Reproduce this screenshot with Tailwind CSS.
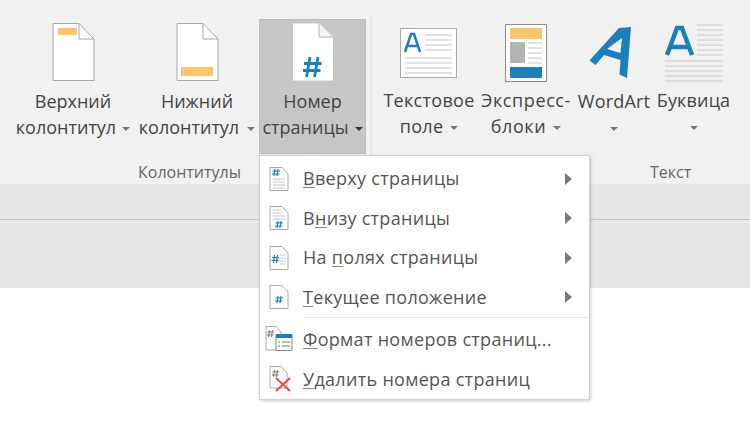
<!DOCTYPE html>
<html><head><meta charset="utf-8"><script src="https://cdn.jsdelivr.net/npm/@tailwindcss/browser@4"></script></head>
<body class="m-0">
<div class="relative w-[750px] h-[428px] overflow-hidden bg-white text-[#444444] font-['Open_Sans','Noto_Sans',sans-serif]">
  <div class="h-[184px] bg-[#f1f1f1] flex">
    <section class="w-[370px] h-full flex flex-col">
      <div class="flex h-[154px] pt-[19px]">
        <div class="w-[11px]"></div>
        <div class="w-[124px] flex flex-col items-center">
          <svg class="mt-[4px] mb-[5px]" width="44" height="60" viewBox="0 0 44 60"><path d="M2 .5H28L43 16V57.500H2Z" fill="#fff" stroke="#a8a8a8"/><path d="M28 .5V16H43" fill="none" stroke="#a8a8a8"/><rect x="7" y="5" width="19" height="7" fill="#fbc56b"/></svg>
          <div class="text-[18px] leading-[26px] text-center whitespace-nowrap">Верхний<br>колонтитул<span class="inline-block align-middle ml-[6px] w-0 h-0 border-x-[4px] border-x-transparent border-t-[4px] border-t-[#777]"></span></div>
        </div>
        <div class="w-[124px] flex flex-col items-center">
          <svg class="mt-[4px] mb-[5px]" width="44" height="60" viewBox="0 0 44 60"><path d="M2 .5H28L43 16V57.500H2Z" fill="#fff" stroke="#a8a8a8"/><path d="M28 .5V16H43" fill="none" stroke="#a8a8a8"/><rect x="6" y="44" width="32" height="9" fill="#fbc56b"/></svg>
          <div class="text-[18px] leading-[26px] text-center whitespace-nowrap">Нижний<br>колонтитул<span class="inline-block align-middle ml-[8px] w-0 h-0 border-x-[4px] border-x-transparent border-t-[4px] border-t-[#777]"></span></div>
        </div>
        <div class="w-[107px] h-[135px] bg-[#c6c6c6] border border-[#bdbdbd] flex flex-col items-center">
          <svg class="mt-[3px] mb-[5px]" width="42" height="60" viewBox="0 0 42 60"><path d="M1 .5H27L41 14V57.500H1Z" fill="#fff"/><path d="M27 .5V14H41" fill="#f1f1f1" stroke="#b0b0b0"/><path d="M18 34 14.500 54M26 34 22.500 54M12 40.500H29.500M11 47.500H28.500" stroke="#1c7fbd" stroke-width="2.800" fill="none"/></svg>
          <div class="text-[18px] leading-[26px] text-center whitespace-nowrap">Номер<br>страницы<span class="inline-block align-middle ml-[6px] w-0 h-0 border-x-[4px] border-x-transparent border-t-[4px] border-t-[#333]"></span></div>
        </div>
      </div>
      <div class="flex-1 pl-[138px] pt-[6px] text-[16px] leading-[24px] text-[#666]">Колонтитулы</div>
    </section>
    <div class="w-[2px] h-[140px] mt-[15px] bg-[#e6e6e6]"></div>
    <section class="flex-1 h-full flex flex-col">
      <div class="flex h-[154px] pt-[19px]">
        <div class="w-[7px]"></div>
        <div class="w-[100px] flex flex-col items-center">
          <svg class="mt-[9px] mb-[9px]" width="58" height="50" viewBox="0 0 58 50"><rect x=".5" y=".5" width="56" height="49" fill="#fff" stroke="#a8a8a8"/><path d="M5 24 11 6h3l6 18M7.500 18H17" fill="none" stroke="#1c7fbd" stroke-width="2.500"/><path d="M25 7H52M25 12H52M25 17H52M25 22H52M5 30H52M5 35H52M5 40H52M5 45H52" stroke="#c4c4c4"/></svg>
          <div class="text-[18px] leading-[26px] text-center whitespace-nowrap tracking-[0.3px]">Текстовое<br>поле<span class="inline-block align-middle ml-[7px] w-0 h-0 border-x-[4px] border-x-transparent border-t-[4px] border-t-[#777]"></span></div>
        </div>
        <div class="w-[94px] flex flex-col items-center">
          <svg class="mt-[5px] mb-[5px]" width="42" height="58" viewBox="0 0 42 58"><rect x=".5" y=".5" width="41" height="57" fill="#fff" stroke="#8c8c8c"/><rect x="5" y="4" width="32" height="11" fill="#fbc56b"/><rect x="5" y="18" width="15" height="21" fill="#b3b3b3"/><path d="M23 19H37M23 24H37M23 29H37M23 34H37M23 39H37" stroke="#c4c4c4"/><rect x="5" y="43" width="32" height="11" fill="#1c7fbd"/></svg>
          <div class="text-[18px] leading-[26px] text-center whitespace-nowrap tracking-[0.6px]">Экспресс-<br>блоки<span class="inline-block align-middle ml-[7px] w-0 h-0 border-x-[4px] border-x-transparent border-t-[4px] border-t-[#777]"></span></div>
        </div>
        <div class="w-[82px] flex flex-col items-center">
          <svg class="mt-[8px] mb-[6px]" width="50" height="55" viewBox="590 27 50 55"><path d="M590.500 60.500 620 28 632 27 628 78 620.500 74.500 621.500 60 605 55 596.500 65ZM608 49 623 38 621.500 53Z" fill="#1c7fbd" fill-rule="evenodd"/></svg>
          <div class="text-[18px] leading-[26px] text-center whitespace-nowrap tracking-[0.2px]">WordArt<br><span class="inline-block align-middle w-0 h-0 border-x-[4px] border-x-transparent border-t-[4px] border-t-[#777]"></span></div>
        </div>
        <div class="w-[77px] flex flex-col items-center">
          <svg class="mt-[5px] mb-[5px]" width="60" height="58" viewBox="0 0 60 58"><path d="M3 31 13 4h5l10 27M7 23H24" fill="none" stroke="#1c7fbd" stroke-width="4.500"/><path d="M33 1H59M33 6H59M33 11H59M33 16H59M33 21H59M33 26H59M33 31H59M1 37H59M1 42H59M1 47H59M1 52H59M1 57H59" stroke="#c8c8c8"/></svg>
          <div class="text-[18px] leading-[26px] text-center whitespace-nowrap tracking-[0.15px]">Буквица<br><span class="inline-block align-middle w-0 h-0 border-x-[4px] border-x-transparent border-t-[4px] border-t-[#777]"></span></div>
        </div>
      </div>
      <div class="flex-1 pl-[278px] pt-[6px] text-[16px] leading-[24px] text-[#666]">Текст</div>
    </section>
  </div>
  <div class="h-[36px] bg-[#e6e6e6] border-b border-[#c9c9c9]"></div>
  <div class="h-[68px] bg-[#e6e6e6]"></div>

  <div class="absolute left-[259px] top-[155px] w-[331px] h-[245px] bg-white border border-[#d0d0d0] shadow-[1px_1px_3px_rgba(0,0,0,0.2)] text-[18px] tracking-[0.3px] text-[#555]">
    <div class="flex flex-col pt-[3px]">
      <div class="h-[39.500px] flex items-center pl-[9px]">
        <svg width="20" height="24" viewBox="0 0 20 24"><path d="M1 .5H13L19 7V23.500H1Z" fill="#fff" stroke="#a8a8a8"/><path d="M4 12H16M4 15H16M4 18H16M4 21H16" stroke="#c4c4c4"/><path d="M6 2 5 9M9 2 8 9M3.500 4H11M3 7H10.500" stroke="#1c7fbd" stroke-width="1.200"/></svg>
        <span class="ml-[14px]"><u class="underline-offset-2 decoration-[#888]">В</u>верху страницы</span>
        <span class="ml-auto mr-[17px] w-0 h-0 border-y-[6px] border-y-transparent border-l-[7px] border-l-[#777]"></span>
      </div>
      <div class="h-[39.500px] flex items-center pl-[9px]">
        <svg width="20" height="24" viewBox="0 0 20 24"><path d="M1 .5H13L19 7V23.500H1Z" fill="#fff" stroke="#a8a8a8"/><path d="M4 4H12M4 7H12M4 10H16M4 13H16" stroke="#c4c4c4"/><path d="M9 15 8 22M12 15 11 22M6.500 17H14M6 20H13.500" stroke="#1c7fbd" stroke-width="1.200"/></svg>
        <span class="ml-[14px]">В<u class="underline-offset-2 decoration-[#888]">н</u>изу страницы</span>
        <span class="ml-auto mr-[17px] w-0 h-0 border-y-[6px] border-y-transparent border-l-[7px] border-l-[#777]"></span>
      </div>
      <div class="h-[39.500px] flex items-center pl-[9px]">
        <svg width="20" height="24" viewBox="0 0 20 24"><path d="M1 .5H13L19 7V23.500H1Z" fill="#fff" stroke="#a8a8a8"/><path d="M11 9H17M11 12H17M11 15H17M11 18H17" stroke="#c4c4c4"/><path d="M5.500 9 4.500 17M8.500 9 7.500 17M3 11.500H10M2.500 14.500H9.500" stroke="#1c7fbd" stroke-width="1.200"/></svg>
        <span class="ml-[14px]">На <u class="underline-offset-2 decoration-[#888]">п</u>олях страницы</span>
        <span class="ml-auto mr-[17px] w-0 h-0 border-y-[6px] border-y-transparent border-l-[7px] border-l-[#777]"></span>
      </div>
      <div class="h-[39.500px] flex items-center pl-[9px]">
        <svg width="20" height="24" viewBox="0 0 20 24"><path d="M1 .5H13L19 7V23.500H1Z" fill="#fff" stroke="#a8a8a8"/><path d="M9 11 8 18M12 11 11 18M6.500 13H14M6 16H13.500" stroke="#1c7fbd" stroke-width="1.200"/></svg>
        <span class="ml-[14px]"><u class="underline-offset-2 decoration-[#888]">Т</u>екущее положение</span>
        <span class="ml-auto mr-[17px] w-0 h-0 border-y-[6px] border-y-transparent border-l-[7px] border-l-[#777]"></span>
      </div>
      <div class="h-px ml-[44px] bg-[#e4e4e4]"></div>
      <div class="h-[40px] flex items-center pl-[5px] pt-[2px]">
        <svg width="28" height="26" viewBox="0 0 28 26"><path d="M1 .5H11L16 6V24H1Z" fill="#fff" stroke="#a8a8a8"/><path d="M4.500 4 3.500 11M7.500 4 6.500 11M2.500 6H9M2 9H8.500" stroke="#777" stroke-width="1"/><rect x="11" y="8.500" width="16" height="16" fill="#fff" stroke="#888"/><rect x="11" y="8" width="16" height="4" fill="#1c7fbd"/><path d="M13 16H15M17 16H25M13 20H15M17 20H25" stroke="#777"/></svg>
        <span class="ml-[10px]"><u class="underline-offset-2 decoration-[#888]">Ф</u>ормат номеров страниц...</span>
      </div>
      <div class="h-[40px] flex items-center pl-[8px] pt-[2px]">
        <svg width="25" height="26" viewBox="0 0 25 26"><path d="M2 .5H13L19 7V22H2Z" fill="#fff" stroke="#a8a8a8"/><path d="M6.500 4 5.500 11M9.500 4 8.500 11M4.500 6H11M4 9H10.500" stroke="#777" stroke-width="1"/><path d="M8 12 22 25M22 12 8 25" stroke="#e0503c" stroke-width="2"/></svg>
        <span class="ml-[10px]"><u class="underline-offset-2 decoration-[#888]">У</u>далить номера страниц</span>
      </div>
    </div>
  </div>
</div>
</body></html>
